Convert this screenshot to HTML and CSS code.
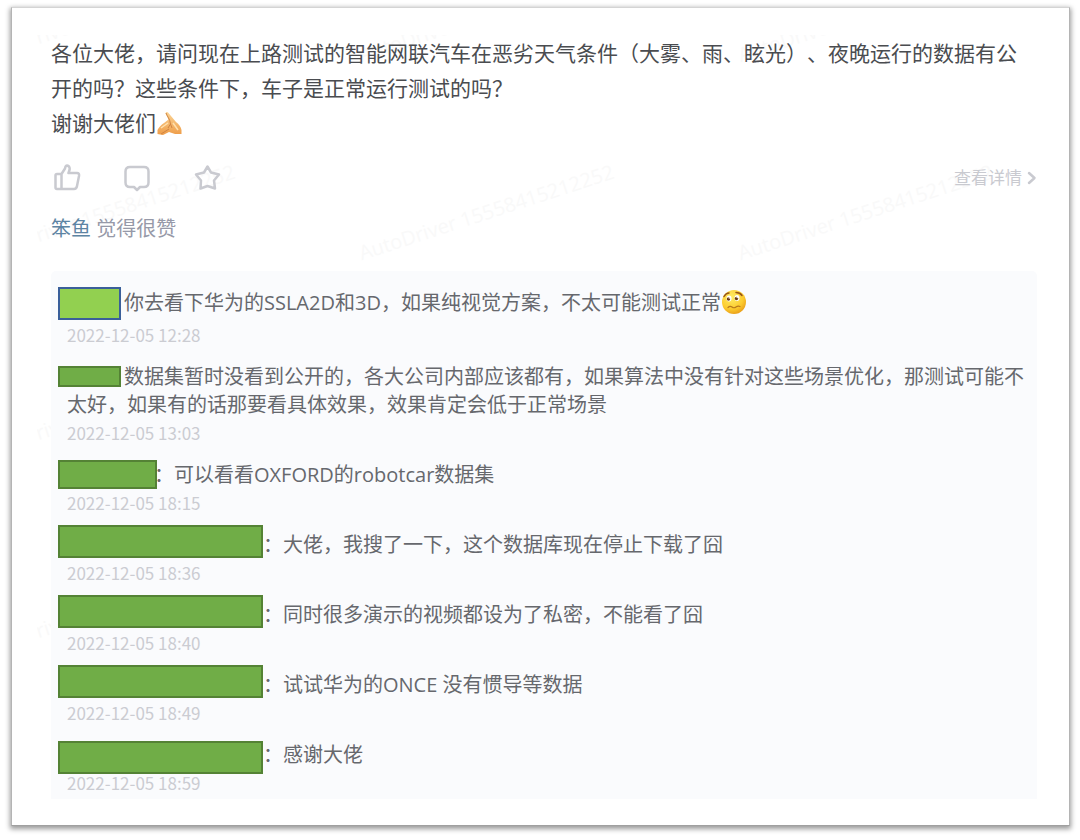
FILE: index.html
```html
<!DOCTYPE html>
<html lang="zh-CN">
<head>
<meta charset="utf-8">
<meta name="viewport" content="width=device-width, initial-scale=1">
<title>讨论</title>
<link rel="stylesheet" href="styles.css">
</head>
<body>
<main class="card">
  <div class="watermarks" aria-hidden="true">
    <span>AutoDriver 15558415212252</span><span>AutoDriver 15558415212252</span><span>AutoDriver 15558415212252</span>
    <span>AutoDriver 15558415212252</span><span>AutoDriver 15558415212252</span><span>AutoDriver 15558415212252</span>
    <span>AutoDriver 15558415212252</span><span>AutoDriver 15558415212252</span><span>AutoDriver 15558415212252</span>
    <span>AutoDriver 15558415212252</span><span>AutoDriver 15558415212252</span><span>AutoDriver 15558415212252</span>
  </div>

  <article class="post">
    <p class="post-text">各位大佬，请问现在上路测试的智能网联汽车在恶劣天气条件（大雾、雨、眩光）、夜晚运行的数据有公开的吗？这些条件下，车子是正常运行测试的吗？<br>谢谢大佬们<svg class="emoji" viewBox="0 0 26 26" role="img" aria-label="合十">
      <defs>
        <linearGradient id="skin" x1="0" y1="0" x2="0" y2="1"><stop offset="0" stop-color="#fbd596"/><stop offset="1" stop-color="#ee9c48"/></linearGradient>
      </defs>
      <path d="M9.500 3.500C10 1.500 11.500 1.500 12.500 3L20 12C23 14 25 17 25.500 20V24H19L13 22L7 25L1.500 24V20C3 17 5 15 8 13L12.500 9.500Z" fill="url(#skin)"/>
      <path d="M10 3C11 6 14 9 14.500 14L16 18M5 24L13 19M14.500 14L12 18" fill="none" stroke="#cf8444" stroke-width="1"/>
      <path d="M5 18L12 13M17 13L22 20" fill="none" stroke="#ffe0ae" stroke-width="1.500"/>
    </svg></p>

    <div class="toolbar">
      <div class="actions">
        <button class="action" type="button" aria-label="赞">
          <svg viewBox="0 0 28 28"><path d="M2.500 11.500Q2.500 10 4 10H8.500L12 4.500L12.500 2.500Q14 .800 16 2.500Q17 4 16.500 6L15.500 9H24Q26.500 9 26 12L24 22Q23.500 25 21 25H4Q2.500 25 2.500 23.500ZM8.500 10V25"/></svg>
        </button>
        <button class="action" type="button" aria-label="评论">
          <svg viewBox="0 0 28 28"><path d="M7 3H21Q25.500 3 25.500 7.500V18.500Q25.500 23 21 23H17L14 26L11 23H7Q2.500 23 2.500 18.500V7.500Q2.500 3 7 3Z"/></svg>
        </button>
        <button class="action" type="button" aria-label="收藏">
          <svg viewBox="0 0 28 28"><path d="M14.500 2.500L18 8.500L26 10.500L21 16.500L22 24.500L14.500 22L7.500 24.500L8 16.500L3 10.500L11 8.500Z"/></svg>
        </button>
      </div>
      <a class="details" href="#comments">查看详情<svg viewBox="0 0 10 14"><path d="M2 2L7.500 7L2 12"/></svg></a>
    </div>

    <p class="likes"><a href="#user">笨鱼</a> 觉得很赞</p>
  </article>

  <ul class="comments" id="comments">
    <li class="comment comment--emoji">
      <span class="mask mask--lime"></span>
      <p class="comment-text"><span class="name name--short"></span>你去看下华为的SSLA2D和3D，如果纯视觉方案，不太可能测试正常<svg class="emoji" viewBox="0 0 26 26" role="img" aria-label="委屈">
        <defs><radialGradient id="face" cx=".4" cy=".3" r=".75"><stop offset="0" stop-color="#ffed66"/><stop offset=".65" stop-color="#fccb2e"/><stop offset="1" stop-color="#e79a17"/></radialGradient></defs>
        <circle cx="13" cy="13" r="12" fill="url(#face)"/>
        <ellipse cx="8" cy="9.500" rx="2.500" ry="3" fill="#fff"/><ellipse cx="16" cy="9" rx="2.500" ry="3" fill="#fff"/>
        <circle cx="7.500" cy="10" r="1.700" fill="#6b3b13"/><circle cx="15.500" cy="9.500" r="1.700" fill="#6b3b13"/>
        <circle cx="8.200" cy="9" r=".7" fill="#fff"/><circle cx="16.200" cy="8.500" r=".7" fill="#fff"/>
        <path d="M3 7.500Q5 4 8 4M15 3.500Q19 3.500 21 6.500" fill="none" stroke="#985516" stroke-width="1.500" stroke-linecap="round"/>
        <path d="M7 18.500Q9 16.500 11 18T15 18T19 17.500" fill="none" stroke="#b87a1c" stroke-width="1.200" stroke-linecap="round"/>
      </svg></p>
      <time datetime="2022-12-05T12:28">2022-12-05 12:28</time>
    </li>
    <li class="comment">
      <span class="mask mask--thin"></span>
      <p class="comment-text"><span class="name name--short"></span>数据集暂时没看到公开的，各大公司内部应该都有，如果算法中没有针对这些场景优化，那测试可能不太好，如果有的话那要看具体效果，效果肯定会低于正常场景</p>
      <time datetime="2022-12-05T13:03">2022-12-05 13:03</time>
    </li>
    <li class="comment">
      <span class="mask mask--medium"></span>
      <p class="comment-text"><span class="name name--medium"></span>：可以看看OXFORD的robotcar数据集</p>
      <time datetime="2022-12-05T18:15">2022-12-05 18:15</time>
    </li>
    <li class="comment">
      <span class="mask mask--wide"></span>
      <p class="comment-text"><span class="name name--wide"></span>：大佬，我搜了一下，这个数据库现在停止下载了囧</p>
      <time datetime="2022-12-05T18:36">2022-12-05 18:36</time>
    </li>
    <li class="comment">
      <span class="mask mask--wide"></span>
      <p class="comment-text"><span class="name name--wide"></span>：同时很多演示的视频都设为了私密，不能看了囧</p>
      <time datetime="2022-12-05T18:40">2022-12-05 18:40</time>
    </li>
    <li class="comment">
      <span class="mask mask--wide"></span>
      <p class="comment-text"><span class="name name--wide"></span>：试试华为的ONCE 没有惯导等数据</p>
      <time datetime="2022-12-05T18:49">2022-12-05 18:49</time>
    </li>
    <li class="comment">
      <span class="mask mask--wide mask--low"></span>
      <p class="comment-text"><span class="name name--wide"></span>：感谢大佬</p>
      <time datetime="2022-12-05T18:59">2022-12-05 18:59</time>
    </li>
  </ul>
</main>
</body>
</html>
```
FILE: styles.css
```css
* {
  box-sizing: border-box;
}

body {
  margin: 0;
  padding: 7px 10px 14px 11px;
  background: #fff;
  color: #4a4c50;
  font-family: "Open Sans", "Noto Sans CJK SC", sans-serif;
  text-spacing-trim: space-all;
}

p {
  margin: 0;
}

.card {
  position: relative;
  padding: 28px 32px 26px 39px;
  background: #fff;
  border: 1px solid #b4b4b4;
  border-top-color: #d4d4d4;
  border-bottom-color: #a0a0a0;
  box-shadow: 0 2px 5px 1px rgba(0, 0, 0, 0.4);
}

/* Tiled watermark behind the content */
.watermarks {
  position: absolute;
  inset: 27px 27px 27px 25px;
  display: grid;
  grid-template-columns: repeat(3, 379px);
  grid-auto-rows: 198px;
  align-content: start;
  align-items: start;
  overflow: hidden;
  color: #f9f9f9;
  font-size: 20px;
  line-height: 28px;
  white-space: nowrap;
}

.watermarks span {
  transform: translate(-52px, 6px) rotate(-18deg);
  transform-origin: 0 100%;
}

.post,
.comments {
  position: relative;
}

.post-text {
  font-size: 21px;
  line-height: 35px;
}

.emoji {
  width: 26px;
  height: 26px;
  vertical-align: -5px;
}

.toolbar {
  display: flex;
  align-items: center;
  justify-content: space-between;
  margin-top: 23px;
}

.actions {
  display: flex;
  gap: 42px;
  padding-left: 2px;
}

.action {
  display: flex;
  padding: 0;
  border: 0;
  background: none;
  cursor: pointer;
}

.action svg {
  width: 28px;
  height: 28px;
}

.action path,
.details path {
  fill: none;
  stroke: #c9cad0;
  stroke-width: 2.5;
  stroke-linecap: round;
  stroke-linejoin: round;
}

.details {
  display: flex;
  align-items: center;
  gap: 5px;
  color: #c9cad0;
  font-size: 17px;
  line-height: 28px;
  text-decoration: none;
}

.details svg {
  width: 10px;
  height: 14px;
}

.likes {
  margin-top: 23px;
  color: #9699a8;
  font-size: 20px;
  line-height: 28px;
}

.likes a {
  color: #5d84a3;
  text-decoration: none;
}

.comments {
  display: flex;
  flex-direction: column;
  gap: 14px;
  margin: 28px 0 0;
  padding: 16px 8px 2px 16px;
  list-style: none;
  background: #fafbfd;
  border-radius: 5px 5px 0 0;
}

.comment {
  position: relative;
  color: #66686d;
  font-size: 20px;
  line-height: 28px;
}

.comment--emoji .comment-text {
  padding-bottom: 2px;
  line-height: 32px;
}

.comment time {
  display: block;
  color: #cbccd2;
  font-family: "Noto Sans CJK SC", sans-serif;
  font-size: 17px;
}

.name {
  display: inline-block;
}

.name--short {
  width: 57px;
}

.name--medium {
  width: 87px;
}

.name--wide {
  width: 196px;
}

/* Blocks that cover the commenters' names */
.mask {
  position: absolute;
  top: -6px;
  left: -9px;
  height: 33px;
  background: #70ad47;
  border: 2px solid #548235;
}

.mask--lime {
  top: 0;
  width: 63px;
  background: #92d050;
  border-color: #3a5f9a;
}

.mask--thin {
  top: 3px;
  width: 63px;
  height: 21px;
}

.mask--medium {
  top: -1px;
  width: 99px;
  height: 29px;
}

.mask--wide {
  width: 205px;
}

.mask--low {
  top: 0;
}
```
